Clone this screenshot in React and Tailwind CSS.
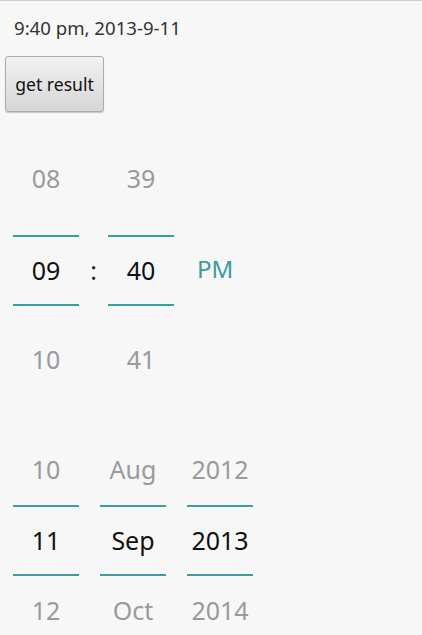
import React from 'react'

const font = { fontFamily: '"Noto Sans", "Open Sans", sans-serif' }

function Line({ className = '' }) {
  return <div className={`h-[2px] bg-[#3a9fa0] ${className}`} />
}

// one wheel column: prev / selected / next
function Wheel({ prev, cur, next, topH, botH, midH = 'h-[67px]' }) {
  return (
    <div className="flex w-[66px] flex-col">
      <div className={`flex items-center justify-center text-[25px] text-[#9a9a9a] ${topH}`}>{prev}</div>
      <Line />
      <div className={`flex items-center justify-center text-[25px] text-[#111] ${midH}`}>{cur}</div>
      <Line />
      <div className={`flex items-center justify-center text-[25px] text-[#9a9a9a] ${botH}`}>{next}</div>
    </div>
  )
}

export default function App() {
  return (
    <div className="h-[635px] w-[422px] overflow-hidden border-t border-[#cfcfcf] bg-[#f7f7f7]" style={font}>
      <div className="pl-[14px] pt-[16px] text-[18.6px] leading-[22px] text-[#333]">9:40 pm, 2013-9-11</div>

      <button className="ml-[5px] mt-[17px] flex h-[56px] w-[99px] items-center justify-center rounded-[3px] border border-[#ababab] bg-gradient-to-b from-[#f2f2f2] to-[#d6d6d6] text-[17.6px] text-[#111] shadow-[0_1px_1px_rgba(0,0,0,0.2)]">
        get result
      </button>

      {/* time picker */}
      <div className="mt-[11px] flex items-start pl-[13px]">
        <Wheel prev="08" cur="09" next="10" topH="h-[112px]" botH="h-[108px]" />
        <div className="flex h-[183px] w-[29px] items-end justify-center pb-[17px] text-[25px] text-[#222]">:</div>
        <Wheel prev="39" cur="40" next="41" topH="h-[112px]" botH="h-[108px]" />
        <div className="ml-[23px] flex h-[183px] items-end pb-[19px] text-[24px] text-[#3a9c9c]">PM</div>
      </div>

      {/* date picker */}
      <div className="mt-[21px] flex gap-[21px] pl-[13px]">
        <Wheel prev="10" cur="11" next="12" topH="h-[70px]" botH="h-[70px]" />
        <Wheel prev="Aug" cur="Sep" next="Oct" topH="h-[70px]" botH="h-[70px]" />
        <Wheel prev="2012" cur="2013" next="2014" topH="h-[70px]" botH="h-[70px]" />
      </div>
    </div>
  )
}
